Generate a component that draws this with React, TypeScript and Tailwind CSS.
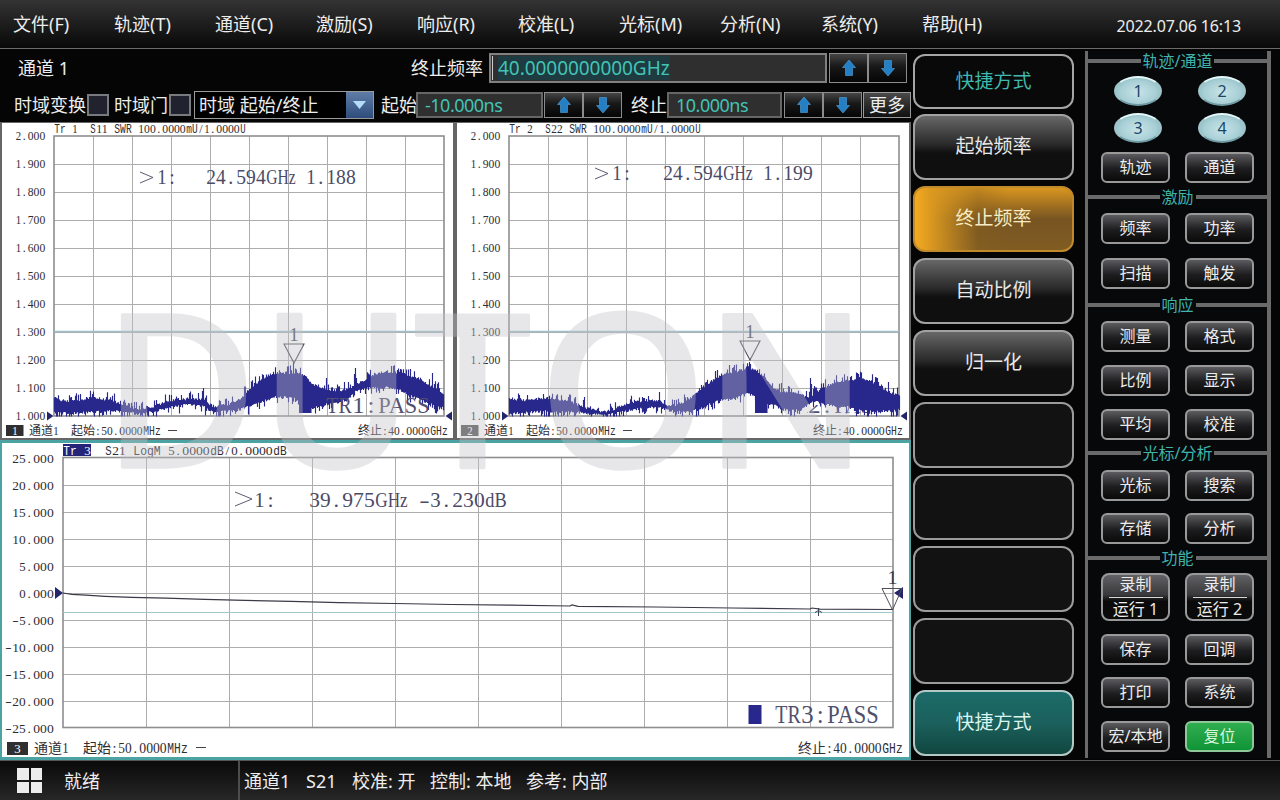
import { ReactNode } from "react";
import clsx from "clsx";

const menus = ["文件(F)", "轨迹(T)", "通道(C)", "激励(S)", "响应(R)", "校准(L)", "光标(M)", "分析(N)", "系统(Y)", "帮助(H)"];

const softKeys = [
  { label: "起始频率", kind: "normal" },
  { label: "终止频率", kind: "active" },
  { label: "自动比例", kind: "normal" },
  { label: "归一化", kind: "normal" },
  { label: "", kind: "empty" },
  { label: "", kind: "empty" },
  { label: "", kind: "empty" },
  { label: "", kind: "empty" },
  { label: "快捷方式", kind: "teal" },
];

const softKeyStyles: Record<string, string> = {
  normal: "border-[#a2a2a2] bg-linear-to-b from-[#686868] via-[#2b2b2b] via-45% to-[#0f0f0f] to-60% text-[#e9e9e9]",
  active:
    "border-[#c08a2a] bg-[linear-gradient(to_right,#f3aa20_0%,#dd9a20_9%,rgba(140,98,30,0.3)_40%,transparent_60%),linear-gradient(to_bottom,#d8961f_0%,#a87420_25%,#775522_50%,#805c22_100%)] text-[#f6ecc4]",
  empty: "border-[#9b9b9b] bg-[#121212]",
  teal: "border-[#b3c9c6] bg-linear-to-b from-[#1b6b69] via-[#1b605c] to-[#11463f] text-[#d9f5ef]",
};

// [x, top, bottom] along the noisy band of each SWR trace
type Envelope = [number, number, number][];

const s11: Envelope = [
  [54, 398, 411], [62, 402, 412], [75, 402, 412], [90, 399, 411], [110, 401, 410], [120, 405, 410],
  [130, 409, 411], [138, 411, 413], [145, 410, 412], [155, 407, 410], [165, 403, 407], [175, 401, 405],
  [190, 400, 403], [203, 401, 405], [208, 405, 409], [215, 408, 411], [225, 406, 410], [233, 404, 410],
  [240, 400, 408], [250, 389, 405], [258, 383, 401], [266, 377, 399], [275, 374, 396], [292, 374, 396],
  [300, 374, 401], [306, 378, 404], [312, 385, 407], [320, 389, 405], [330, 391, 402], [340, 392, 401],
  [347, 390, 398], [352, 388, 392], [360, 383, 388], [370, 378, 386], [380, 374, 386], [390, 373, 387],
  [400, 374, 389], [410, 377, 394], [420, 381, 399], [430, 387, 403], [437, 390, 405], [444, 395, 406],
];

const s22: Envelope = [
  [509, 399, 412], [518, 402, 412], [530, 401, 411], [545, 399, 410], [560, 401, 411], [570, 403, 411],
  [580, 407, 411], [592, 411, 413], [605, 413, 414], [615, 410, 412], [625, 406, 410], [635, 403, 408],
  [650, 402, 406], [660, 402, 406], [667, 407, 409], [675, 406, 410], [685, 403, 411], [695, 396, 409],
  [705, 387, 405], [715, 380, 400], [725, 374, 398], [735, 373, 397], [745, 370, 392], [752, 370, 393],
  [758, 373, 401], [764, 379, 404], [772, 389, 403], [780, 393, 407], [790, 394, 409], [800, 396, 409],
  [808, 398, 403], [815, 394, 400], [822, 389, 402], [832, 385, 405], [842, 383, 405], [852, 381, 407],
  [860, 379, 409], [870, 382, 410], [878, 387, 410], [886, 392, 410], [893, 395, 410], [900, 396, 407],
];

function bandPath(env: Envelope, spikes: [number, number][], seed: number) {
  let s = seed;
  const rand = () => {
    s = (s * 16807) % 2147483647;
    return s / 2147483647;
  };
  let d = "";
  let k = 0;
  for (let x = env[0][0]; x < env[env.length - 1][0]; x++) {
    while (k < env.length - 2 && env[k + 1][0] < x) k++;
    const [x0, t0, b0] = env[k];
    const [x1, t1, b1] = env[k + 1];
    const f = (x - x0) / (x1 - x0);
    const spread = rand() > 0.6 ? 9 : 2.5;
    const dip = rand() > 0.6 ? 9 : 2.5;
    let top = t0 + (t1 - t0) * f - rand() * spread;
    const bottom = Math.min(416.5, b0 + (b1 - b0) * f + rand() * dip);
    const spike = spikes.find((p) => p[0] === x);
    if (spike) top = spike[1];
    d += `M${x + 0.5} ${top.toFixed(1)}V${bottom.toFixed(1)}`;
  }
  return d;
}

const s11Path = bandPath(s11, [[203, 388], [202, 391], [293, 362], [326, 378], [355, 368], [354, 374], [432, 373]], 77);
const s22Path = bandPath(s22, [[584, 397], [659, 392], [749, 362], [750, 364], [781, 383], [810, 378], [811, 384], [888, 382]], 1234);

// Bitmap style lettering: every half width cell takes the same advance
function Cells({ x, y, adv, size, text, fill = "#2e2e33" }: { x: number; y: number; adv: number; size: number; text: string; fill?: string }) {
  const runs = text.match(/[0-9]+|[A-Za-z]+|[\u4e00-\u9fff]+|[^\sA-Za-z0-9]|\s+/g) || [];
  let at = x;
  return (
    <text y={y} fontSize={size} fill={fill} xmlSpace="preserve" className="font-['Liberation_Serif','Noto_Sans_CJK_SC',serif]">
      {runs.map((run, i) => {
        const cjk = /[\u4e00-\u9fff]/.test(run);
        const width = run.length * adv * (cjk ? 2 : 1);
        const start = at;
        at += width;
        if (/^\s+$/.test(run)) return null;
        if (/^[A-Za-z0-9]+$/.test(run) || cjk || run === "-") {
          return (
            <tspan
              key={i}
              x={start + (cjk ? 0 : 0.3)}
              textLength={width - (cjk ? 0 : 0.6)}
              lengthAdjust="spacingAndGlyphs"
              className={clsx(adv < 8 && /[A-Za-z]/.test(run) && "font-['Liberation_Mono',monospace]")}
            >
              {run}
            </tspan>
          );
        }
        return (
          <tspan key={i} x={start + adv * 0.22}>
            {run}
          </tspan>
        );
      })}
    </text>
  );
}

function Grid({ x, y, dx, dy }: { x: number; y: number; dx: number; dy: number }) {
  const n = [1, 2, 3, 4, 5, 6, 7, 8, 9];
  return (
    <g fill="none">
      <path
        d={n.map((i) => `M${Math.round(x + i * dx) + 0.5} ${y}v${dy * 10}M${x} ${Math.round(y + i * dy) + 0.5}h${dx * 10}`).join("")}
        stroke="#adadad"
      />
      <rect x={x} y={y} width={dx * 10} height={dy * 10} stroke="#8e8e8e" strokeWidth="1.6" />
    </g>
  );
}

function Marker({ x, y }: { x: number; y: number }) {
  return (
    <g>
      <Cells x={x - 5} y={y - 22} adv={10} size={19} text="1" fill="#4a4a58" />
      <path d={`M${x - 10} ${y - 19}h20L${x} ${y}z`} fill="none" stroke="#50505c" strokeWidth="1.1" />
    </g>
  );
}

const swrScale = ["2.000", "1.900", "1.800", "1.700", "1.600", "1.500", "1.400", "1.300", "1.200", "1.100", "1.000"];
const logScale = ["25.000", "20.000", "15.000", "10.000", "5.000", "0.000", "-5.000", "-10.000", "-15.000", "-20.000", "-25.000"];

function SwrChart({ left, id }: { left: number; id: 1 | 2 }) {
  const second = id === 2;
  const gx = left + 54;
  return (
    <svg width={second ? 452 : 451} height="315" viewBox={`${left + 2} 123 ${second ? 452 : 451} 315`} className="bg-white">
      <Cells x={gx} y={133} adv={6} size={12} text={`Tr ${id}  S${id}${id} SWR 100.0000mU/1.0000U`} />
      <Grid x={gx} y={136} dx={39} dy={28} />
      {swrScale.map((v, i) => (
        <Cells key={v} x={left + 15.5} y={140 + i * 28} adv={6} size={12} text={v} />
      ))}
      <path d={`M${gx} 331.500h390`} stroke="#9fc0cb" strokeWidth="1.3" />
      <Cells x={left + 157} y={second ? 180 : 184} adv={10} size={20} text="1:" fill="#4b4b66" />
      <path d={`M${left + 140} ${second ? 168 : 172}l13 5.500l-13 5.500`} fill="none" stroke="#5c5c70" />
      <Cells x={left + (second ? 208 : 206)} y={second ? 180 : 184} adv={10} size={20} text={`24.594GHz 1.1${second ? "99" : "88"}`} fill="#4b4b66" />
      {second ? (
        <g clipPath="url(#verdict)">
          <Cells x={782} y={413} adv={13} size={24} text="TR2:PASS" fill="#4d4d78" />
        </g>
      ) : null}
      <clipPath id="verdict">
        <rect x="807" y="405" width="62" height="14" />
      </clipPath>
      <path d={second ? s22Path : s11Path} stroke="#28288c" strokeWidth="1.15" fill="none" />
      <rect x={second ? 755 : 299} y="397" width="12.500" height="16" fill="#28288c" />
      {!second && <Cells x={326} y={412.5} adv={13} size={24} text="TR1:PASS" fill="#4f4f70" />}
      <Marker x={left + (second ? 295 : 294)} y={second ? 360 : 363} />
      <path d={`M${left + 47} 411.500l6.500 4.500l-6.500 4.500z M${left + 452} 411.500l-6.500 4.500l6.500 4.500z`} fill="#25256b" />
      <rect x={left + 6} y="425" width="17.500" height="11" fill={second ? "#555" : "#2f2f2f"} />
      <Cells x={left + 12} y={434.5} adv={6} size={12} text={`${id}`} fill="#fff" />
      <Cells x={left + 29} y={435} adv={6} size={12} text="通道1" />
      <Cells x={left + 71} y={435} adv={6} size={12} text="起始:50.0000MHz" />
      <path d={`M${left + 168} 430.500h9`} stroke="#444" />
      <Cells x={left + 358} y={435} adv={6} size={12} text="终止:40.0000GHz" />
    </svg>
  );
}

function LogChart() {
  return (
    <svg width="907" height="314" viewBox="2 443 907 314" className="bg-white">
      <rect x="63" y="444" width="28" height="12" fill="#242478" />
      <Cells x={63} y={454.5} adv={7} size={13} text="Tr 3" fill="#fff" />
      <Cells x={105} y={454.5} adv={7} size={13} text="S21 LogM 5.0000dB/0.0000dB" />
      <Grid x={63} y={457.5} dx={83} dy={27} />
      {logScale.map((v, i) => (
        <Cells key={v} x={54 - v.length * 7} y={462.5 + i * 27} adv={7} size={13.5} text={v} />
      ))}
      <path d="M63 612.500H893" stroke="#a3c6cc" />
      <path
        d="M63 593L72 594.300L86 595.200L105 596.300L132 597.300L166 598.200L205 599.300L245 600.400L291 601.400L339 602.600L395 603.500L452 604.500L510 605.200L570 606L572 605L578 606.400L655 607L732 608L810 609L812 608L820 609.200L893 609.500"
        stroke="#3a3a48"
        strokeWidth="1.2"
        fill="none"
      />
      <path d="M815 612.500l3.500 -2l3.500 2M818.500 608v8" stroke="#3a4258" fill="none" />
      <path d="M235 492l17 7l-17 7" fill="none" stroke="#5c5c70" />
      <Cells x={254} y={507} adv={11} size={22} text="1:" fill="#4b4b66" />
      <Cells x={309} y={507} adv={11} size={22} text="39.975GHz -3.230dB" fill="#4b4b66" />
      <path d="M55 587l8 6l-8 6zM903 587v12l-9 -6z" fill="#25256b" />
      <path d="M882 588.500h20L892.500 610z" fill="none" stroke="#50505c" />
      <Cells x={887} y={584} adv={11} size={18} text="1" fill="#3c3c48" />
      <rect x="748.500" y="705" width="13" height="19" fill="#28288c" />
      <Cells x={775} y={723} adv={13} size={25} text="TR3:PASS" fill="#50506e" />
      <rect x="7" y="742" width="21" height="13" fill="#2f2f2f" />
      <Cells x={14} y={753} adv={7} size={13} text="3" fill="#fff" />
      <Cells x={34} y={753} adv={7} size={14} text="通道1" />
      <Cells x={83} y={753} adv={7} size={14} text="起始:50.0000MHz" />
      <path d="M196 747.500h10" stroke="#444" />
      <Cells x={798} y={753} adv={7} size={14} text="终止:40.0000GHz" />
    </svg>
  );
}

const watermark = [
  { c: "D", x: 103, w: 154 },
  { c: "U", x: 260, w: 153 },
  { c: "T", x: 414, w: 117 },
  { c: "O", x: 539, w: 168 },
  { c: "N", x: 704, w: 164 },
];

function ArrowKey({ down }: { down?: boolean }) {
  return (
    <div className="flex w-[39px] items-center justify-center border border-[#8b8b8b] bg-linear-to-b from-[#454545] via-[#181818] via-45% to-[#060606]">
      <svg width="16" height="18" viewBox="0 0 16 18" className={clsx(down && "rotate-180")}>
        <path d="M8 1L14.500 8.500H11.500V16.500H4.500V8.500H1.500z" fill="#2380c6" stroke="#55a2d8" strokeWidth="0.600" />
      </svg>
    </div>
  );
}

function Key({ children, green }: { children: ReactNode; green?: boolean }) {
  return (
    <div
      className={clsx(
        "flex h-[31px] items-center justify-center rounded-[6px] border-2 pb-px text-base whitespace-nowrap",
        green
          ? "border-[#8fc79b] bg-linear-to-b from-[#2fae50] to-[#0c9436] text-[#d6f7d9]"
          : "border-[#999] bg-linear-to-b from-[#5c5c60] via-[#1d1d1f] via-55% to-[#0a0a0a] text-[#ececec]"
      )}
    >
      {children}
    </div>
  );
}

function Section({ title, height, children }: { title: string; height: string; children: ReactNode }) {
  return (
    <div className={height}>
      <div className="flex h-5 items-center">
        <div className="h-1 flex-1 bg-[#6a6a6a]" />
        <div className="px-0.5 text-base leading-5 text-[#3fb3ac]">{title}</div>
        <div className="h-1 flex-1 bg-[#6a6a6a]" />
      </div>
      {children}
    </div>
  );
}

function Oval({ n }: { n: number }) {
  return (
    <div className="flex justify-center pl-[5px]">
      <div className="flex h-[30px] w-12 items-center justify-center rounded-[50%] border-2 border-t-[#e3f7f9] border-r-[#9fc4ca] border-b-[#6f9aa3] border-l-[#9fc4ca] bg-[radial-gradient(ellipse_at_50%_55%,#c6e4e8_0%,#a9d0d6_55%,#7fb0b8_100%)] text-base text-[#1d4564]">
        {n}
      </div>
    </div>
  );
}

const rowGrid = "grid grid-cols-[69px_69px] gap-x-[15px] pl-[13px]";

function RecordKey({ n }: { n: number }) {
  return (
    <div className="flex h-12 flex-col items-center rounded-[8px] border-2 border-[#999] bg-linear-to-b from-[#626266] via-[#39393b] via-45% to-[#0a0a0a] to-60% text-base text-[#ececec]">
      <div className="h-[23px] w-[54px] shrink-0 border-b border-[#d5d5d5] text-center leading-[18px]">录制</div>
      <div className="shrink-0 leading-[22px]">运行 {n}</div>
    </div>
  );
}

export default function App() {
  return (
    <div className="flex h-[800px] w-[1280px] flex-col overflow-hidden bg-black font-['Noto_Sans','Noto_Sans_CJK_SC',sans-serif] text-[18px] whitespace-nowrap text-[#ededed]">
      <header className="flex h-[49px] shrink-0 border-b border-[#6b6b6b] bg-linear-to-b from-[#343434] to-[#090909]">
        {menus.map((m) => (
          <div key={m} className="w-[101px] pl-[13px] leading-[49px]">
            {m}
          </div>
        ))}
        <div className="ml-auto pr-[39px] text-[16px] leading-[52px] tracking-[-0.15px]">2022.07.06 16:13</div>
      </header>

      <main className="flex h-[711px] shrink-0 bg-[#050505]">
        <div className="flex w-[911px] flex-col">
          <div className="flex h-[38px] shrink-0 items-center pl-[18px]">
            <div className="w-[393px]">通道 1</div>
            <div className="w-[78px]">终止频率</div>
            <div className="flex h-[30px] w-[338px] items-center border-2 border-[#808080] bg-[#2f2f2f] text-[19px] text-[#43c3b5]">
              <div className="mr-[5px] ml-px h-6 w-px bg-[#ccc]" />
              <span className="bg-[#1d3b40] leading-6 tracking-[-0.05px]">40.0000000000GHz</span>
            </div>
            <div className="ml-0.5 flex h-[30px]">
              <ArrowKey />
              <ArrowKey down />
            </div>
          </div>

          <div className="flex h-9 shrink-0 items-center pl-3.5">
            <div className="w-[73px]">时域变换</div>
            <div className="size-[22px] border-2 border-[#777b80] bg-[#20232e]" />
            <div className="ml-[5px] w-[55px]">时域门</div>
            <div className="size-[22px] border-2 border-[#777b80] bg-[#20232e]" />
            <div className="ml-[3px] flex h-7 w-[180px] items-center border border-[#999] bg-black">
              <div className="flex-1 pl-1">时域 起始/终止</div>
              <div className="flex h-full w-[27px] items-center justify-center bg-linear-to-b from-[#5f7da6] to-[#2e4d7c]">
                <svg width="13" height="8" viewBox="0 0 13 8">
                  <path d="M0 0H13L6.500 8z" fill="#b5dcf8" />
                </svg>
              </div>
            </div>
            <div className="ml-[7px] w-[35px]">起始</div>
            <div className="h-[26px] w-[127px] border-2 border-[#666] bg-[#2f2f2f] pl-[7px] text-[18px] leading-[22px] tracking-[-0.5px] text-[#43c3b5]">-10.000ns</div>
            <div className="ml-px flex h-[26px]">
              <ArrowKey />
              <ArrowKey down />
            </div>
            <div className="ml-[9px] w-9">终止</div>
            <div className="h-[26px] w-[115px] border-2 border-[#666] bg-[#2f2f2f] pl-[7px] text-[18px] leading-[22px] tracking-[-0.5px] text-[#43c3b5]">10.000ns</div>
            <div className="ml-0.5 flex h-[26px]">
              <ArrowKey />
              <ArrowKey down />
            </div>
            <div className="ml-px flex h-[26px] w-[48px] items-center justify-center border border-[#999] bg-linear-to-b from-[#4a4a4a] to-[#101010]">更多</div>
          </div>

          <div className="relative -mt-px flex h-[638px] shrink-0 flex-col">
            <div className="flex h-[318px] gap-1 border-x-2 border-t border-b-2 border-[#666] bg-[#666]">
              <SwrChart left={0} id={1} />
              <SwrChart left={455} id={2} />
            </div>
            <div className="h-[320px] border-x-2 border-y-3 border-[#4ba3a3]">
              <LogChart />
            </div>
            <svg width="911" height="638" viewBox="0 122 911 638" className="pointer-events-none absolute inset-0">
              <g
                fill="#c2c2c6"
                stroke="#c2c2c6"
                strokeWidth="3.500"
                strokeLinejoin="round"
                opacity="0.380"
                fontSize="213"
                fontWeight="500"
                className="font-['Noto_Sans',sans-serif]"
              >
                {watermark.map((l) => (
                  <text key={l.c} x={l.x} y="466.500" textLength={l.w} lengthAdjust="spacingAndGlyphs">
                    {l.c}
                  </text>
                ))}
              </g>
            </svg>
          </div>
        </div>

        <div className="flex w-[174px] flex-col pt-[5px] pl-0.5 text-[19px]">
          <div className="mb-[5px] flex h-[55px] w-[161px] items-center justify-center rounded-[12px] border-2 border-[#a5a5a5] bg-[#090909] text-[#3fb8ad]">快捷方式</div>
          <div className="flex flex-col gap-1.5">
            {softKeys.map((k, i) => (
              <div key={i} className={clsx("flex h-[66px] w-[161px] items-center justify-center rounded-[12px] border-2 pb-0.5", softKeyStyles[k.kind])}>
                {k.label}
              </div>
            ))}
          </div>
        </div>

        <div className="mt-0.5 h-[707px] w-[186px] border-r-4 border-l-[3px] border-[#6a6a6a] bg-[#07080a]">
          <Section title="轨迹/通道" height="h-[136px]">
            <div className={clsx(rowGrid, "gap-y-[7px] pt-[5px]")}>
              <Oval n={1} />
              <Oval n={2} />
              <Oval n={3} />
              <Oval n={4} />
            </div>
            <div className={clsx(rowGrid, "pt-[9px]")}>
              <Key>轨迹</Key>
              <Key>通道</Key>
            </div>
          </Section>
          <Section title="激励" height="h-[108px]">
            <div className={clsx(rowGrid, "gap-y-3.5 pt-1.5")}>
              <Key>频率</Key>
              <Key>功率</Key>
              <Key>扫描</Key>
              <Key>触发</Key>
            </div>
          </Section>
          <Section title="响应" height="h-[148px]">
            <div className={clsx(rowGrid, "gap-y-[13px] pt-1.5")}>
              <Key>测量</Key>
              <Key>格式</Key>
              <Key>比例</Key>
              <Key>显示</Key>
              <Key>平均</Key>
              <Key>校准</Key>
            </div>
          </Section>
          <Section title="光标/分析" height="h-[105px]">
            <div className={clsx(rowGrid, "gap-y-3 pt-[7px]")}>
              <Key>光标</Key>
              <Key>搜索</Key>
              <Key>存储</Key>
              <Key>分析</Key>
            </div>
          </Section>
          <Section title="功能" height="h-[210px]">
            <div className={clsx(rowGrid, "gap-y-[12.500px] pt-[5px]")}>
              <RecordKey n={1} />
              <RecordKey n={2} />
              <Key>保存</Key>
              <Key>回调</Key>
              <Key>打印</Key>
              <Key>系统</Key>
              <Key>宏/本地</Key>
              <Key green>复位</Key>
            </div>
          </Section>
        </div>
      </main>

      <footer className="flex h-10 shrink-0 items-center border-t border-[#555] bg-linear-to-b from-[#0a0a0a] to-[#272727]">
        <div className="ml-[17px] grid grid-cols-2 gap-0.5">
          <div className="size-[11.500px] bg-[#ececec]" />
          <div className="size-[11.500px] bg-[#ececec]" />
          <div className="size-[11.500px] bg-[#ececec]" />
          <div className="size-[11.500px] bg-[#ececec]" />
        </div>
        <div className="ml-[22px] w-[174px] pt-px">就绪</div>
        <div className="h-full w-0.5 bg-[#4d4d4d]" />
        <div className="flex pt-px pl-1">
          <div className="w-[62px]">通道1</div>
          <div className="w-[46px]">S21</div>
          <div className="w-[78px]">校准: 开</div>
          <div className="w-[96px]">控制: 本地</div>
          <div>参考: 内部</div>
        </div>
      </footer>
    </div>
  );
}
